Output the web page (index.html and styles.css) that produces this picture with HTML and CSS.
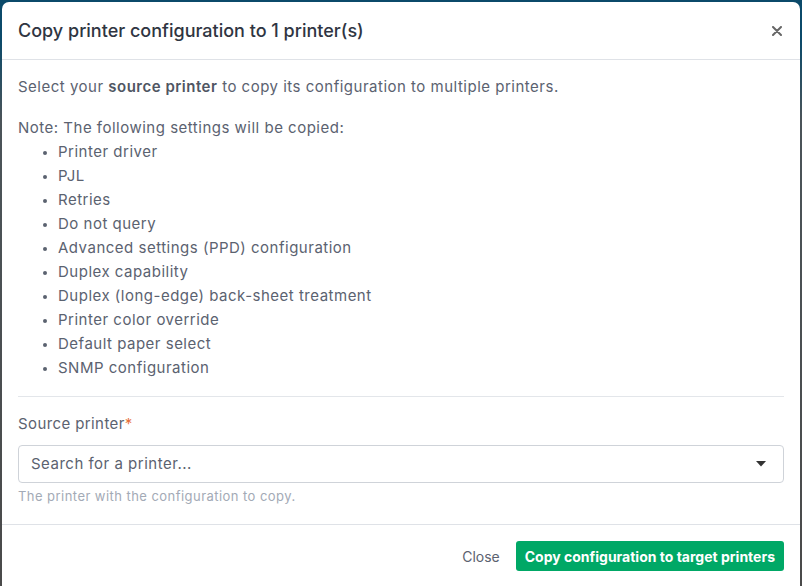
FILE: index.html
```html
<!DOCTYPE html>
<html lang="en">
<head>
<meta charset="utf-8">
<title>Copy printer configuration</title>
<link rel="stylesheet" href="styles.css">
</head>
<body>
<div class="modal">
  <div class="modal-header">
    <h1 class="modal-title">Copy printer configuration to 1 printer(s)</h1>
    <button class="close-x" aria-label="Close">
      <svg width="10" height="10" viewBox="0 0 10 10"><path d="M1 1 L9 9 M9 1 L1 9" stroke="#666" stroke-width="2" stroke-linecap="round"/></svg>
    </button>
  </div>
  <div class="modal-body">
    <p class="intro">Select your <strong>source printer</strong> to copy its configuration to multiple printers.</p>
    <p class="note">Note: The following settings will be copied:</p>
    <ul class="settings">
      <li>Printer driver</li>
      <li>PJL</li>
      <li>Retries</li>
      <li>Do not query</li>
      <li>Advanced settings (PPD) configuration</li>
      <li>Duplex capability</li>
      <li>Duplex (long-edge) back-sheet treatment</li>
      <li>Printer color override</li>
      <li>Default paper select</li>
      <li>SNMP configuration</li>
    </ul>
    <hr class="divider">
    <label class="field-label">Source printer<span class="req">*</span></label>
    <div class="select">
      <span class="placeholder">Search for a printer...</span>
      <svg class="caret" width="10" height="6" viewBox="0 0 10 6"><path d="M0 0 H10 L5 5.5 Z" fill="#333"/></svg>
    </div>
    <div class="help">The printer with the configuration to copy.</div>
  </div>
  <div class="modal-footer">
    <button class="btn-link">Close</button>
    <button class="btn-primary">Copy configuration to target printers</button>
  </div>
</div>
</body>
</html>
```

FILE: styles.css
```css
html, body {
  margin: 0;
  height: 100%;
}
body {
  background: linear-gradient(180deg, #0b4a6a 0px, #0b4a6a 40px, #4b5459 120px, #4a4a4a 100%);
  font-family: Inter, "Open Sans", "Liberation Sans", sans-serif;
  color: #5b6270;
  overflow: hidden;
}
.modal {
  margin: 2px 2px 0 2px;
  background: #fff;
  border-radius: 7px 7px 0 0;
  min-height: 600px;
}
.modal-header {
  height: 57px;
  display: flex;
  align-items: center;
  justify-content: space-between;
  padding: 0 16px;
  border-bottom: 1px solid #dfe2e7;
}
.modal-title {
  margin: 0;
  font-size: 18px;
  font-weight: 500;
  color: #2f3542;
}
.close-x {
  background: none;
  border: 0;
  padding: 0;
  margin-right: 2px;
  display: flex;
  cursor: pointer;
}
.modal-body {
  padding: 15px 16px 19px;
  font-size: 15px;
  line-height: 24px;
  letter-spacing: 0.5px;
}
.intro, .note {
  margin: 0 0 17px;
}
.note { margin-bottom: 0; }
.intro strong {
  font-weight: 600;
  color: #4f5663;
}
.settings {
  margin: 0;
  padding-left: 40px;
}
.settings li::marker {
  font-size: 12px;
}
.divider {
  border: 0;
  border-top: 1px solid #e3e6ea;
  margin: 16px 0 15px;
}
.field-label {
  display: block;
  color: #5b6270;
  letter-spacing: 0.4px;
}
.req { color: #e8703a; }
.select {
  margin-top: 9px;
  height: 36px;
  border: 1px solid #cfd3d9;
  border-radius: 4px;
  display: flex;
  align-items: center;
  justify-content: space-between;
  padding: 0 17px 0 12px;
}
.placeholder { color: #5b6270; }
.help {
  margin-top: 4px;
  font-size: 13px;
  line-height: 18px;
  letter-spacing: 0.45px;
  color: #a3aab6;
}
.modal-footer {
  border-top: 1px solid #dfe2e7;
  padding: 16px;
  display: flex;
  justify-content: flex-end;
  align-items: center;
  gap: 8px;
}
.btn-link {
  background: none;
  border: 0;
  font: inherit;
  font-size: 14px;
  color: #5b6270;
  padding: 6px 8px;
}
.btn-primary {
  background: #00a866;
  color: #fff;
  border: 0;
  border-radius: 3px;
  height: 30px;
  padding: 0 9px;
  font: inherit;
  font-size: 14px;
  font-weight: 700;
}
```
